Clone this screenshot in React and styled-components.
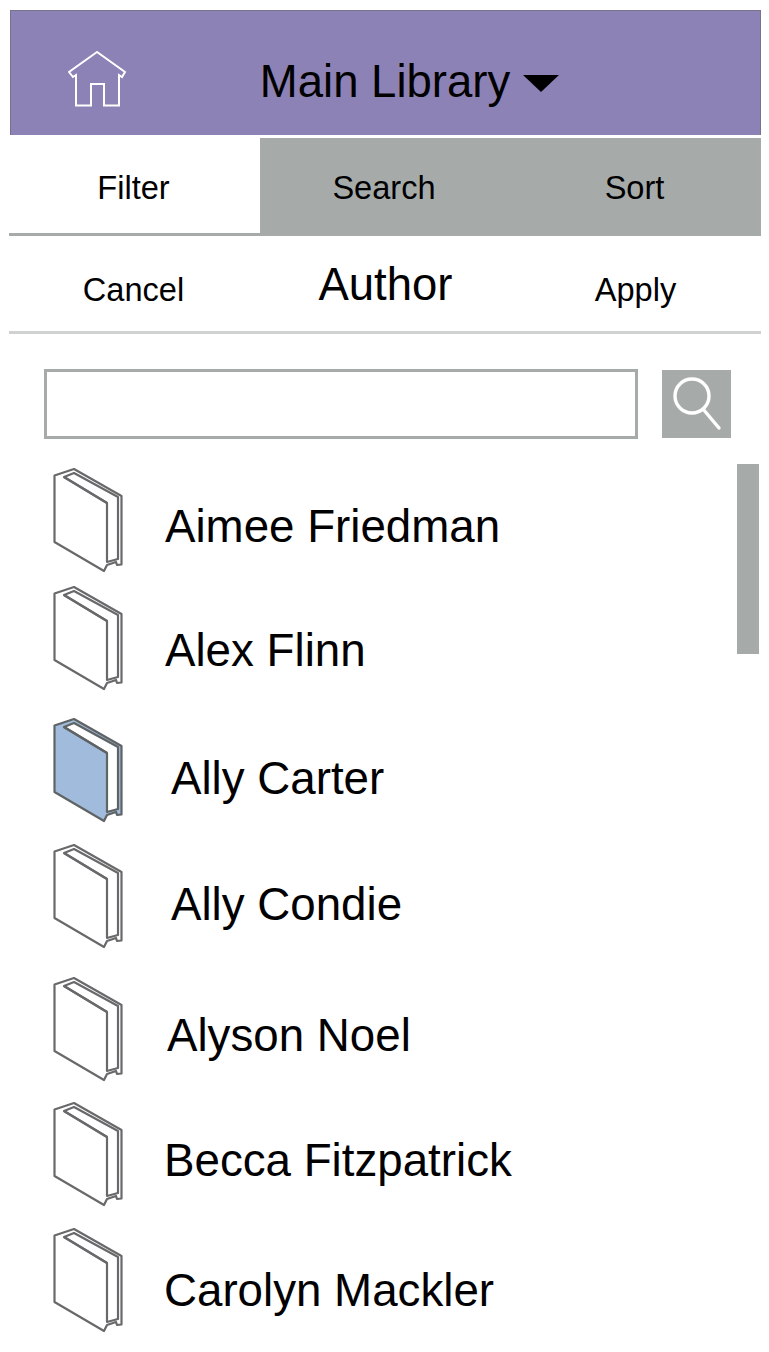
import React from "react";
import styled, { createGlobalStyle } from "styled-components";

const Global = createGlobalStyle`
  html, body { margin: 0; padding: 0; background: #fff; }
  body { font-family: "Liberation Sans", Arial, sans-serif; color: #000; }
`;
const Page = styled.div`
  position: relative;
  width: 769px;
  height: 1352px;
  overflow: hidden;
  padding: 10px 8px 0 10px;
  box-sizing: border-box;
`;
const Header = styled.header`
  position: relative;
  height: 125px;
  box-sizing: border-box;
  background: #8d82b6;
  border: 1px solid #77738e;
  border-bottom: 0;
  display: flex;
  align-items: center;
  justify-content: center;
  gap: 13px;
  padding: 18px 0 0 48px;
`;
const HomeButton = styled.div`
  position: absolute;
  left: 57px;
  top: 40px;
  width: 60px;
  height: 58px;
`;
const Title = styled.h1`
  margin: 0;
  font-size: 45.5px;
  font-weight: 400;
  line-height: 50px;
`;
const Caret = styled.span`
  width: 0;
  height: 0;
  margin-top: 3px;
  border-left: 18px solid transparent;
  border-right: 18px solid transparent;
  border-top: 17px solid #000;
`;
const Tabs = styled.nav`
  display: flex;
  margin-top: 3px;
  margin-left: -1px;
  height: 98px;
  box-sizing: border-box;
  border-bottom: 3px solid #a6abaa;
`;
const Tab = styled.div`
  width: ${(p) => p.$w}px;
  display: flex;
  align-items: center;
  justify-content: center;
  font-size: 32.6px;
  padding: 5px 2px 0 0;
  box-sizing: border-box;
  background: ${(p) => (p.$active ? "#fff" : "#a6abaa")};
`;
const Toolbar = styled.div`
  display: grid;
  grid-template-columns: 250px 252px 250px;
  margin-left: -1px;
  height: 98px;
  box-sizing: border-box;
  border-bottom: 3px solid #d0d2d2;
  align-items: center;
  justify-items: center;
`;
const ToolAction = styled.div`
  font-size: 32.6px;
  padding: 13px 1px 0 0;
`;
const ToolTitle = styled.div`
  font-size: 45.5px;
  padding: 3px 0 0 1px;
`;
const SearchRow = styled.div`
  display: flex;
  align-items: center;
  gap: 24px;
  margin: 35px 0 0 34px;
`;
const SearchInput = styled.div`
  width: 594px;
  height: 70px;
  box-sizing: border-box;
  border: 3px solid #a6abaa;
  background: #fff;
`;
const SearchButton = styled.div`
  width: 69px;
  height: 68px;
  background: #a6abaa;
`;
const Scrollbar = styled.div`
  position: absolute;
  left: 737px;
  top: 464px;
  width: 22px;
  height: 190px;
  background: #a6abaa;
`;
const List = styled.ul`
  list-style: none;
  margin: 29px 0 0;
  padding: 0 0 0 43px;
`;
const Row = styled.li`
  display: flex;
  align-items: center;
  height: 103px;
  margin-top: ${(p) => p.$top}px;
`;
const BookIcon = styled.svg`
  width: 70px;
  height: 104px;
  flex: none;
  overflow: visible;
`;
const Name = styled.span`
  font-size: 45.7px;
  line-height: 54px;
  margin-left: ${(p) => p.$indent}px;
  padding-top: ${(p) => p.$drop}px;
`;

const Book = ({ selected }) => (
  <BookIcon
    viewBox="0 0 70 104"
    fill="none"
    stroke={selected ? "#5f6364" : "#68696a"}
    strokeWidth="2.2"
    strokeLinejoin="round"
  >
    <path
      d="M1.5 7.5 L21 1 L68.5 28 V96.5 L64 97 L63 94 L54 97 L51 103 L1.5 74 Z"
      fill={selected ? "#a1bbdc" : "none"}
    />
    <path d="M11 9 L21 5 L65 29 V91 L54 94 V35 Z" fill={selected ? "#fff" : "none"} />
    <path d="M11 9 L54 35" />
  </BookIcon>
);

const authors = [
  { name: "Aimee Friedman", top: 0, indent: 42, drop: 14 },
  { name: "Alex Flinn", top: 15, indent: 42, drop: 26 },
  { name: "Ally Carter", top: 29, indent: 48, drop: 18 },
  { name: "Ally Condie", top: 23, indent: 48, drop: 18 },
  { name: "Alyson Noel", top: 30, indent: 44, drop: 14 },
  { name: "Becca Fitzpatrick", top: 22, indent: 41, drop: 14 },
  { name: "Carolyn Mackler", top: 23, indent: 41, drop: 23 },
];

export default function App() {
  return (
    <Page>
      <Global />
      <Header>
        <HomeButton>
          <svg width="60" height="58" viewBox="0 0 60 58" fill="none" stroke="#fff" strokeWidth="2">
            <path d="M29 1 L1 21 L5 26 L8 24 V54.5 H23 V33 H36 V54.5 H51 V24 L54 26 L57 21 Z" />
          </svg>
        </HomeButton>
        <Title>Main Library</Title>
        <Caret />
      </Header>
      <Tabs>
        <Tab $w={251} $active>Filter</Tab>
        <Tab $w={250}>Search</Tab>
        <Tab $w={251}>Sort</Tab>
      </Tabs>
      <Toolbar>
        <ToolAction>Cancel</ToolAction>
        <ToolTitle>Author</ToolTitle>
        <ToolAction>Apply</ToolAction>
      </Toolbar>
      <SearchRow>
        <SearchInput />
        <SearchButton>
          <svg width="69" height="68" viewBox="0 0 69 68" fill="none" stroke="#fff" strokeWidth="3.4" strokeLinecap="round">
            <circle cx="30" cy="26" r="17" />
            <path d="M41 39 L57 58" />
          </svg>
        </SearchButton>
      </SearchRow>
      <List>
        {authors.map((a, i) => (
          <Row key={a.name} $top={a.top}>
            <Book selected={i === 2} />
            <Name $indent={a.indent} $drop={a.drop}>{a.name}</Name>
          </Row>
        ))}
      </List>
      <Scrollbar />
    </Page>
  );
}
